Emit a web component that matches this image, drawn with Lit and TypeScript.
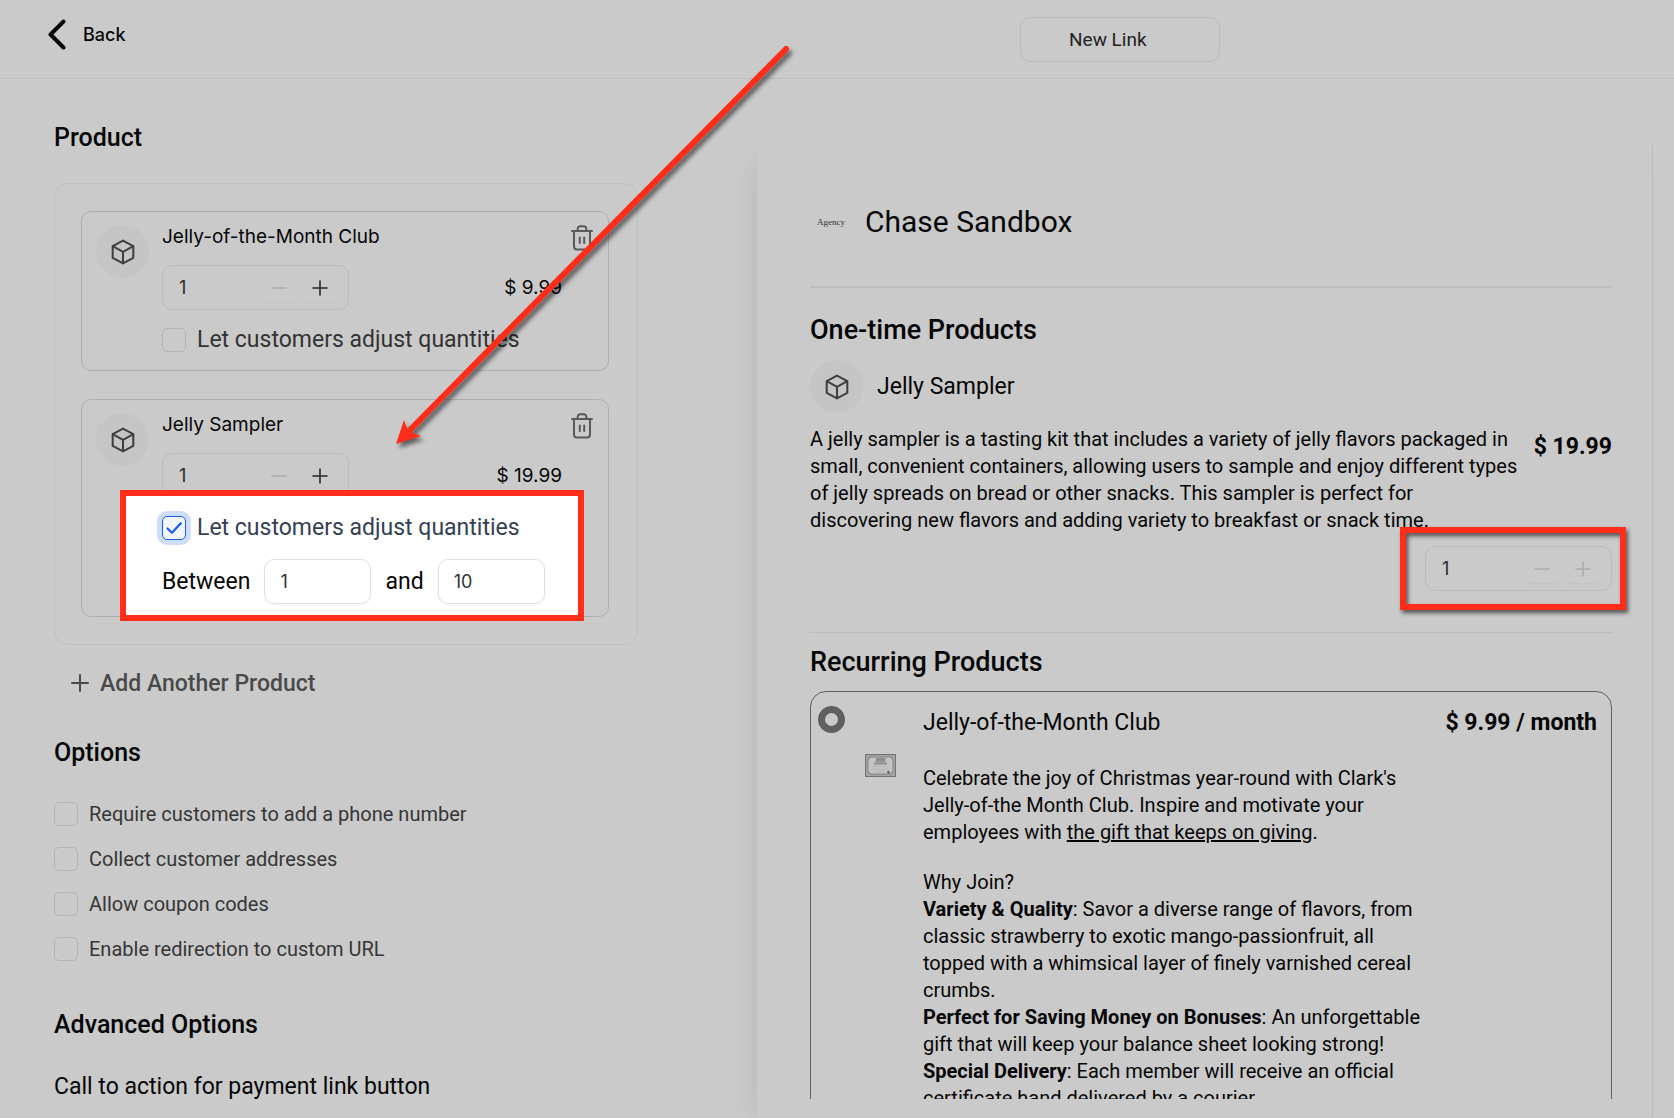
import { LitElement, html, svg, css, nothing } from "lit";
import { customElement, property } from "lit/decorators.js";

const cube = svg`<path d="M12 1.5 21.5 6.5V17.5L12 22.5 2.5 17.5V6.5Z M2.5 6.5 12 11.8 21.5 6.5 M12 11.8V22.5" />`;

const shared = css`
  * {
    box-sizing: border-box;
  }
  button,
  input {
    font: inherit;
    color: inherit;
    margin: 0;
    padding: 0;
    border: 0;
    background: none;
    min-width: 0;
  }
  h1, h2, h3, p {
    margin: 0;
    font-size: inherit;
    font-weight: 400;
  }
  svg {
    display: block;
    fill: none;
    stroke: currentColor;
    stroke-linejoin: round;
    stroke-linecap: round;
  }
`;

@customElement("product-icon")
export class ProductIcon extends LitElement {
  static styles = [
    shared,
    css`
      :host {
        display: grid;
        place-items: center;
        flex: none;
        width: 53px;
        height: 53px;
        border-radius: 50%;
        background: #c5c5c5;
        color: #404040;
      }
    `,
  ];

  render() {
    return html`<svg width="26" height="26" viewBox="0 0 24 24" stroke-width="1.9" aria-hidden="true">${cube}</svg>`;
  }
}

@customElement("quantity-stepper")
export class QuantityStepper extends LitElement {
  @property() value = "1";
  @property({ type: Boolean }) locked = false;

  static styles = [
    shared,
    css`
      :host {
        display: block;
        width: 187px;
        font-family: Inter, sans-serif;
        font-size: 18px;
      }
      .stepper {
        display: flex;
        align-items: center;
        height: 45px;
        padding: 0 11px 0 16px;
        border: 1px solid #bcbcbc;
        border-radius: 10px;
        color: #2a2a2a;
      }
      .value {
        flex: 1;
        width: 0;
      }
      .step {
        display: grid;
        place-items: center;
        width: 34px;
        height: 28px;
        border-radius: 5px;
        box-shadow: 0 1px 1px #c4c4c4;
      }
      .step + .step {
        margin-left: 7px;
      }
      .step:disabled {
        color: #acacac;
      }
    `,
  ];

  render() {
    return html`<div class="stepper">
      <input class="value" type="text" aria-label="Quantity" .value=${this.value} />
      <button class="step" aria-label="Decrease" disabled>
        <svg width="16" height="16" viewBox="0 0 16 16" stroke-width="1.6"><path d="M1 8H15" /></svg>
      </button>
      <button class="step" aria-label="Increase" ?disabled=${this.locked}>
        <svg width="16" height="16" viewBox="0 0 16 16" stroke-width="1.6"><path d="M1 8H15M8 1V15" /></svg>
      </button>
    </div>`;
  }
}

@customElement("check-field")
export class CheckField extends LitElement {
  @property() label = "";
  @property({ type: Boolean }) checked = false;

  static styles = [
    shared,
    css`
      :host {
        display: block;
      }
      .field {
        display: flex;
        align-items: center;
        gap: 11px;
        height: 24px;
        white-space: nowrap;
      }
      .mark {
        display: grid;
        color: #155eef;
      }
      .mark > * {
        grid-area: 1 / 1;
      }
      .box {
        appearance: none;
        width: 24px;
        height: 24px;
        border: 1px solid #b4b4b4;
        border-radius: 5px;
      }
      .box:checked {
        border-color: #155eef;
        background: #f2f5fc;
        box-shadow: 0 0 0 5px #cfddfc;
      }
      svg {
        place-self: center;
        pointer-events: none;
      }
    `,
  ];

  render() {
    return html`<label class="field">
      <span class="mark">
        <input class="box" type="checkbox" .checked=${this.checked} />
        ${this.checked
          ? html`<svg width="18" height="18" viewBox="0 0 18 18" stroke-width="2.2"><path d="M2.5 9.5 7 13.8 15.8 4.2" /></svg>`
          : nothing}
      </span>
      <span>${this.label}</span>
    </label>`;
  }
}

@customElement("product-card")
export class ProductCard extends LitElement {
  @property() name = "";
  @property() price = "";
  @property({ type: Boolean }) adjustable = false;

  static styles = [
    shared,
    css`
      :host {
        display: block;
        font-family: Inter, sans-serif;
        font-size: 19px;
        line-height: 24px;
      }
      .card {
        position: relative;
        display: flex;
        gap: 13px;
        padding: 13px 15px 12px 14px;
        border: 1px solid #b0b0b0;
        border-radius: 10px;
      }
      .body {
        flex: 1;
        min-width: 0;
      }
      .head,
      .amount {
        display: flex;
        justify-content: space-between;
      }
      .head {
        height: 24px;
      }
      .amount {
        align-items: center;
        margin: 16px 31px 18px 0;
      }
      .trash {
        align-self: flex-start;
        color: #5a5a5a;
      }
      .adjust {
        position: relative;
        padding-bottom: 6px;
        font-family: Roboto, sans-serif;
        font-size: 23px;
        color: #333;
      }
      .adjust.on {
        color: #344054;
      }
      .limits {
        position: relative;
        display: flex;
        align-items: center;
        gap: 14px;
        margin-top: 13px;
        font-family: Roboto, sans-serif;
        font-size: 23px;
      }
      .limit {
        width: 107px;
        height: 45px;
        padding: 0 15px;
        border: 1px solid #e0e0e2;
        border-radius: 10px;
        box-shadow: 0 1px 2px #1018280d;
        font-family: Inter, sans-serif;
        font-size: 18px;
        color: #333;
      }
      .spotlight {
        position: absolute;
        left: 38px;
        right: 24px;
        top: 90px;
        bottom: -5px;
        border: 6px solid #ff2d1a;
        background: #fff;
      }
    `,
  ];

  render() {
    return html`<article class="card">
      <product-icon></product-icon>
      <div class="body">
        <div class="head">
          <h3>${this.name}</h3>
          <button class="trash" aria-label="Remove">
            <svg width="22" height="26" viewBox="0 0 22 26" stroke-width="2">
              <path d="M1 6H21M6.5 5.5C6.5 2.5 7.5 1.2 9.5 1.2H12.5C14.5 1.2 15.5 2.5 15.5 5.5M3 6.5V21.5A3 3 0 0 0 6 24.5H16A3 3 0 0 0 19 21.5V6.5M8.8 12.5V18M13.2 12.5V18" />
            </svg>
          </button>
        </div>
        <div class="amount">
          <quantity-stepper></quantity-stepper>
          <span>${this.price}</span>
        </div>
        ${this.adjustable ? html`<div class="spotlight"></div>` : nothing}
        <div class="adjust ${this.adjustable ? "on" : ""}">
          <check-field label="Let customers adjust quantities" .checked=${this.adjustable}></check-field>
        </div>
        ${this.adjustable
          ? html`<div class="limits">
              <label for="min">Between</label>
              <input class="limit" id="min" type="text" value="1" />
              <label for="max">and</label>
              <input class="limit" id="max" type="text" value="10" />
            </div>`
          : nothing}
      </div>
    </article>`;
  }
}

@customElement("app-root")
export class AppRoot extends LitElement {
  static styles = [
    shared,
    css`
      :host {
        position: relative;
        display: flex;
        flex-direction: column;
        height: 100vh;
        overflow: hidden;
        background: #cacaca;
        color: #060606;
        font-family: Roboto, sans-serif;
        font-size: 20px;
        line-height: 27px;
      }
      .top,
      .main {
        display: grid;
        grid-template-columns: minmax(0, 757fr) minmax(0, 917fr);
      }
      .top {
        flex: none;
        align-items: start;
        height: 79px;
        border-bottom: 1px solid #bfbfbf;
      }
      .back {
        display: flex;
        align-items: center;
        justify-self: start;
        gap: 17px;
        height: 31px;
        margin: 19px 0 0 48px;
        font-family: Inter, sans-serif;
        font-size: 18px;
        font-weight: 500;
      }
      .link-name {
        width: 200px;
        height: 45px;
        margin: 17px 0 0 263px;
        padding: 0 48px;
        border: 1px solid #bcbcbc;
        border-radius: 10px;
        font-size: 19px;
        color: #222;
      }
      .main {
        flex: 1;
        min-height: 0;
      }
      .form {
        min-height: 0;
        overflow: hidden;
        padding: 43px 119px 0 54px;
      }
      .heading {
        font-size: 25px;
        font-weight: 500;
        line-height: 32px;
      }
      .group {
        display: flex;
        flex-direction: column;
        gap: 28px;
        margin-top: 29px;
        padding: 27px 28px 27px 26px;
        border: 1px solid #c0c0c0;
        border-radius: 14px;
      }
      .add {
        display: flex;
        align-items: center;
        gap: 11px;
        height: 28px;
        margin: 24px 0 40px 17px;
        font-size: 23px;
        font-weight: 500;
        color: #4a4a4a;
      }
      .options {
        display: flex;
        flex-direction: column;
        gap: 21px;
        margin: 33px 0 48px;
        color: #363636;
      }
      .cta {
        margin-top: 30px;
        font-size: 23px;
        line-height: 32px;
      }
      .preview {
        display: flex;
        flex-direction: column;
        min-height: 0;
        margin: 66px 21px 0 0;
        padding: 57px 20px 19px 53px;
        border-right: 1px solid #bdbdbd;
        box-shadow: -10px 10px 24px -8px #00000014;
      }
      .scroll {
        flex: 1;
        min-height: 0;
        overflow: hidden;
        padding-right: 20px;
      }
      .merchant {
        display: flex;
        align-items: center;
        gap: 20px;
        padding-bottom: 44px;
        border-bottom: 2px solid #bebebe;
      }
      .logo {
        width: 35px;
        font-family: "Liberation Serif", serif;
        font-size: 9px;
        text-align: right;
        color: #333;
      }
      .merchant-name {
        font-size: 30px;
        line-height: 40px;
      }
      .section {
        font-size: 27px;
        font-weight: 500;
        line-height: 32px;
      }
      .once {
        padding: 26px 0 41px;
        border-bottom: 1px solid #bebebe;
      }
      .item {
        display: flex;
        align-items: center;
        gap: 14px;
        margin: 14px 0 13px;
      }
      .item-name,
      .price {
        font-size: 23px;
        line-height: 32px;
      }
      .price {
        flex: none;
        font-weight: 700;
      }
      .detail {
        display: flex;
        gap: 16px;
      }
      .detail p {
        flex: 1;
      }
      .detail .price {
        margin-top: 5px;
      }
      .pick {
        width: max-content;
        margin: 12px 0 0 auto;
        position: relative;
      }
      .callout {
        position: absolute;
        inset: -19px -14px -19px -25px;
        border: 6px solid #ff2d1a;
        filter: drop-shadow(2px 3px 2px #00000099);
        pointer-events: none;
      }
      .again {
        margin: 13px 0;
      }
      .plan {
        display: flex;
        align-items: flex-start;
        padding: 14px 14px 40px 7px;
        border: 1px solid #606060;
        border-radius: 16px;
      }
      .radio {
        appearance: none;
        flex: none;
        width: 27px;
        height: 27px;
        border: 7px solid #606060;
        border-radius: 50%;
      }
      .certificate {
        flex: none;
        margin: 48px 27px 0 20px;
      }
      .plan-body {
        flex: 1;
        min-width: 0;
        padding: 1px 16px 0 0;
      }
      .plan-body p:first-of-type {
        margin: 26px 0 23px;
      }
      .plan .price {
        padding-top: 1px;
      }
      .arrow {
        position: absolute;
        left: 390px;
        top: 40px;
        filter: drop-shadow(3px 4px 2px #00000088);
        pointer-events: none;
      }
    `,
  ];

  private options = [
    "Require customers to add a phone number",
    "Collect customer addresses",
    "Allow coupon codes",
    "Enable redirection to custom URL",
  ];

  render() {
    return html`
      <header class="top">
        <button class="back">
          <svg width="18" height="31" viewBox="0 0 18 31" stroke-width="4"><path d="M15.5 2.5 2.5 15.5 15.5 28.5" /></svg>
          Back
        </button>
        <input class="link-name" type="text" aria-label="Link name" value="New Link" />
      </header>
      <main class="main">
        <section class="form">
          <h2 class="heading">Product</h2>
          <div class="group">
            <product-card name="Jelly-of-the-Month Club" price="$ 9.99"></product-card>
            <product-card name="Jelly Sampler" price="$ 19.99" adjustable></product-card>
          </div>
          <button class="add">
            <svg width="18" height="18" viewBox="0 0 18 18" stroke-width="2"><path d="M1 9H17M9 1V17" /></svg>
            Add Another Product
          </button>
          <h2 class="heading">Options</h2>
          <div class="options">
            ${this.options.map((label) => html`<check-field .label=${label}></check-field>`)}
          </div>
          <h2 class="heading">Advanced Options</h2>
          <p class="cta">Call to action for payment link button</p>
        </section>
        <section class="preview">
          <div class="scroll">
            <div class="merchant">
              <span class="logo">Agency</span>
              <h1 class="merchant-name">Chase Sandbox</h1>
            </div>
            <div class="once">
              <h2 class="section">One-time Products</h2>
              <div class="item">
                <product-icon></product-icon>
                <h3 class="item-name">Jelly Sampler</h3>
              </div>
              <div class="detail">
                <p>
                  A jelly sampler is a tasting kit that includes a variety of jelly flavors packaged in small,
                  convenient containers, allowing users to sample and enjoy different types of jelly spreads on
                  bread or other snacks. This sampler is perfect for discovering new flavors and adding variety to
                  breakfast or snack time.
                </p>
                <strong class="price">$ 19.99</strong>
              </div>
              <div class="pick">
                <quantity-stepper locked></quantity-stepper>
                <div class="callout"></div>
              </div>
            </div>
            <h2 class="section again">Recurring Products</h2>
            <div class="plan">
              <input class="radio" type="radio" name="plan" aria-label="Jelly-of-the-Month Club" />
              <svg class="certificate" width="31" height="23" viewBox="0 0 31 23" stroke-width="1">
                <rect x="0.5" y="0.5" width="30" height="22" fill="#a2a2a2" stroke="#747474" stroke-linejoin="miter" />
                <path d="M5 3H26Q26 5 28 5V18Q26 18 26 20H5Q5 18 3 18V5Q5 5 5 3Z" fill="#c4c4c4" stroke="#858585" />
                <path d="M11 5H20.5M10.5 7.3H20.5M9 9.6H22" stroke="#8b8b8b" stroke-width="1.9" stroke-linecap="butt" />
                <path d="M7 12.5H24M6 15.5H25M12 17.5H20" stroke="#b2b2b2" stroke-width="0.8" />
                <circle cx="23.5" cy="18.3" r="1" fill="#666" stroke="#666" />
              </svg>
              <div class="plan-body">
                <h3 class="item-name">Jelly-of-the-Month Club</h3>
                <p>
                  Celebrate the joy of Christmas year-round with Clark's Jelly-of-the Month Club. Inspire and motivate
                  your employees with <u>the gift that keeps on giving</u>.
                </p>
                <p>Why Join?</p>
                <p>
                  <b>Variety &amp; Quality</b>: Savor a diverse range of flavors, from classic strawberry to exotic
                  mango-passionfruit, all topped with a whimsical layer of finely varnished cereal crumbs.
                </p>
                <p>
                  <b>Perfect for Saving Money on Bonuses</b>: An unforgettable gift that will keep your balance sheet
                  looking strong!
                </p>
                <p><b>Special Delivery</b>: Each member will receive an official certificate hand delivered by a courier.</p>
              </div>
              <strong class="price">$ 9.99 / month</strong>
            </div>
          </div>
        </section>
      </main>
      <svg class="arrow" width="410" height="420" viewBox="0 0 410 420" aria-hidden="true">
        <path d="M396 9 17 393" stroke="#ff2d1a" stroke-width="6" />
        <path d="M6 404 14 380 18 391 31 396Z" fill="#ff2d1a" stroke="none" />
      </svg>
    `;
  }
}
